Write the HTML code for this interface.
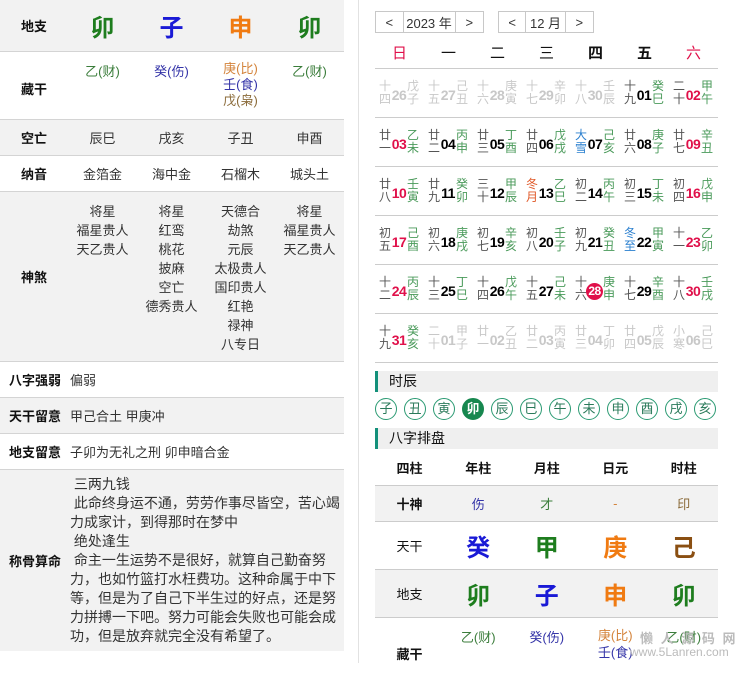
<!DOCTYPE html>
<html><head><meta charset="utf-8">
<style>
*{margin:0;padding:0;box-sizing:border-box}
body{width:740px;height:663px;overflow:hidden;background:#fff;font-family:"Liberation Sans","Noto Sans CJK SC","Microsoft YaHei",sans-serif;font-size:13px;color:#333;position:relative}
.L{position:absolute;left:0;top:0;width:344px}
.r{position:absolute;left:0;width:344px;border-bottom:1px solid #d4d4d4;display:flex;align-items:center}
.g{background:#f2f2f2}
.lab{width:68px;text-align:center;font-weight:bold;color:#111}
.lab2{width:70px;text-align:center;font-weight:bold;color:#111;white-space:nowrap}
.c{width:69px;text-align:center}
.big{font-size:24px;font-weight:bold}
.gr{color:#1e7d1e}.bl{color:#1a1ad6}.or{color:#f07b12}.br{color:#8a4f12}
.sgr{color:#3b7d3b}.sbl{color:#3434a8}.sor{color:#d4843c}.sbr{color:#8b6b3a}
.vline{position:absolute;left:358px;top:0;width:1px;height:663px;background:#e2e2e2}
.nav{position:absolute;top:11px;height:22px;border:1px solid #c8c8c8;display:flex;font-size:13px;color:#333}
.nav span{display:flex;align-items:center;justify-content:center;border-right:1px solid #c8c8c8}
.nav span:last-child{border-right:none}
.wk{position:absolute;left:375px;top:40px;width:343px;height:29px;display:flex;border-bottom:1px solid #ccc}
.wk div{width:49px;text-align:center;font-size:15px;line-height:28px;color:#111}
.wk div.rd{color:#e0104a}
.row{position:absolute;left:375px;width:343px;height:49px;display:flex;border-bottom:1px solid #ccc}
.d{width:49px;display:flex;align-items:center;padding-left:4px}
.lu{width:12px;font-size:12px;line-height:13px;color:#555}
.n{width:16px;font-size:14px;font-weight:bold;color:#000;text-align:center;margin-top:4px;letter-spacing:-0.5px}
.gz{width:12px;font-size:12px;line-height:13px;color:#4a9a5a}
.n.rd{color:#e0104a}
.p .lu,.p .n,.p .gz{color:#c8c8c8}
.jq{color:#2a7fcf}
.yue{color:#e05a2a}
.cir{display:inline-block;width:17px;height:17px;border-radius:50%;background:#e0104a;color:#fff;font-size:12px;line-height:17px;text-align:center;margin-left:-1px}
.hd{position:absolute;left:375px;width:343px;height:21px;background:#efefef;border-left:3px solid #13907a;font-size:14px;line-height:21px;padding-left:11px;color:#111}
.sc{position:absolute;left:375px;top:398px;display:flex}
.sc span{width:22px;height:22px;border:1px solid #2a9a72;border-radius:50%;margin-right:7px;text-align:center;line-height:20px;font-size:13px;color:#2a7a5a}
.sc span.on{background:#17874f;color:#fff;border-color:#17874f;font-weight:bold}
.br2{position:absolute;left:375px;width:343px;display:flex;align-items:center;border-bottom:1px solid #ccc}
.br2 .a{width:69px;text-align:center;font-weight:bold;color:#111}
.br2 .b{width:68.5px;text-align:center}
.wm{position:absolute;left:640px;top:628px;color:#bbb;font-size:13px;font-weight:bold;letter-spacing:2px;white-space:nowrap}
.wm2{position:absolute;left:630px;top:645px;color:#bbb;font-size:12px;white-space:nowrap}
.cg{line-height:19px;width:274px;font-size:14px;white-space:nowrap}
</style></head><body>
<div class="L">
<div class="r g" style="top:0;height:52px"><div class="lab">地支</div><div class="c big gr">卯</div><div class="c big bl">子</div><div class="c big or">申</div><div class="c big gr">卯</div></div>
<div class="r" style="top:52px;height:68px;align-items:flex-start"><div class="lab" style="margin-top:27px">藏干</div><div class="c sgr" style="margin-top:9px">乙(财)</div><div class="c sbl" style="margin-top:9px">癸(伤)</div><div class="c" style="margin-top:9px;line-height:16px"><span class="sor">庚(比)</span><br><span class="sbl">壬(食)</span><br><span class="sbr">戊(枭)</span></div><div class="c sgr" style="margin-top:9px">乙(财)</div></div>
<div class="r g" style="top:120px;height:36px"><div class="lab">空亡</div><div class="c">辰巳</div><div class="c">戌亥</div><div class="c">子丑</div><div class="c">申酉</div></div>
<div class="r" style="top:156px;height:36px"><div class="lab">纳音</div><div class="c">金箔金</div><div class="c">海中金</div><div class="c">石榴木</div><div class="c">城头土</div></div>
<div class="r g" style="top:192px;height:170px;align-items:flex-start;line-height:19px"><div class="lab" style="margin-top:76px">神煞</div><div class="c" style="margin-top:10px">将星<br>福星贵人<br>天乙贵人</div><div class="c" style="margin-top:10px">将星<br>红鸾<br>桃花<br>披麻<br>空亡<br>德秀贵人</div><div class="c" style="margin-top:10px">天德合<br>劫煞<br>元辰<br>太极贵人<br>国印贵人<br>红艳<br>禄神<br>八专日</div><div class="c" style="margin-top:10px">将星<br>福星贵人<br>天乙贵人</div></div>
<div class="r" style="top:362px;height:36px"><div class="lab2">八字强弱</div><div>偏弱</div></div>
<div class="r g" style="top:398px;height:36px"><div class="lab2">天干留意</div><div>甲己合土 甲庚冲</div></div>
<div class="r" style="top:434px;height:36px"><div class="lab2">地支留意</div><div>子卯为无礼之刑 卯申暗合金</div></div>
<div class="r g" style="top:470px;height:181px;border-bottom:none"><div class="lab2">称骨算命</div><div class="cg">&nbsp;三两九钱<br>&nbsp;此命终身运不通，劳劳作事尽皆空，苦心竭<br>力成家计，到得那时在梦中<br>&nbsp;绝处逢生<br>&nbsp;命主一生运势不是很好，就算自己勤奋努<br>力，也如竹篮打水枉费功。这种命属于中下<br>等，但是为了自己下半生过的好点，还是努<br>力拼搏一下吧。努力可能会失败也可能会成<br>功，但是放弃就完全没有希望了。</div></div>
</div>
<div class="vline"></div>

<div class="nav" style="left:375px;width:109px"><span style="width:28px">&lt;</span><span style="width:53px">2023 年</span><span style="width:28px">&gt;</span></div>
<div class="nav" style="left:498px;width:96px"><span style="width:28px">&lt;</span><span style="width:40px">12 月</span><span style="width:28px">&gt;</span></div>
<div class="wk"><div class="rd">日</div><div>一</div><div>二</div><div>三</div><div style="font-weight:bold">四</div><div style="font-weight:bold">五</div><div class="rd">六</div></div>

<div class="row" style="top:69px">
<div class="d p"><div class="lu">十四</div><div class="n">26</div><div class="gz">戊子</div></div>
<div class="d p"><div class="lu">十五</div><div class="n">27</div><div class="gz">己丑</div></div>
<div class="d p"><div class="lu">十六</div><div class="n">28</div><div class="gz">庚寅</div></div>
<div class="d p"><div class="lu">十七</div><div class="n">29</div><div class="gz">辛卯</div></div>
<div class="d p"><div class="lu">十八</div><div class="n">30</div><div class="gz">壬辰</div></div>
<div class="d"><div class="lu">十九</div><div class="n">01</div><div class="gz">癸巳</div></div>
<div class="d"><div class="lu">二十</div><div class="n rd">02</div><div class="gz">甲午</div></div>
</div>
<div class="row" style="top:118px">
<div class="d"><div class="lu">廿一</div><div class="n rd">03</div><div class="gz">乙未</div></div>
<div class="d"><div class="lu">廿二</div><div class="n">04</div><div class="gz">丙申</div></div>
<div class="d"><div class="lu">廿三</div><div class="n">05</div><div class="gz">丁酉</div></div>
<div class="d"><div class="lu">廿四</div><div class="n">06</div><div class="gz">戊戌</div></div>
<div class="d"><div class="lu jq">大雪</div><div class="n">07</div><div class="gz">己亥</div></div>
<div class="d"><div class="lu">廿六</div><div class="n">08</div><div class="gz">庚子</div></div>
<div class="d"><div class="lu">廿七</div><div class="n rd">09</div><div class="gz">辛丑</div></div>
</div>
<div class="row" style="top:167px">
<div class="d"><div class="lu">廿八</div><div class="n rd">10</div><div class="gz">壬寅</div></div>
<div class="d"><div class="lu">廿九</div><div class="n">11</div><div class="gz">癸卯</div></div>
<div class="d"><div class="lu">三十</div><div class="n">12</div><div class="gz">甲辰</div></div>
<div class="d"><div class="lu yue">冬月</div><div class="n">13</div><div class="gz">乙巳</div></div>
<div class="d"><div class="lu">初二</div><div class="n">14</div><div class="gz">丙午</div></div>
<div class="d"><div class="lu">初三</div><div class="n">15</div><div class="gz">丁未</div></div>
<div class="d"><div class="lu">初四</div><div class="n rd">16</div><div class="gz">戊申</div></div>
</div>
<div class="row" style="top:216px">
<div class="d"><div class="lu">初五</div><div class="n rd">17</div><div class="gz">己酉</div></div>
<div class="d"><div class="lu">初六</div><div class="n">18</div><div class="gz">庚戌</div></div>
<div class="d"><div class="lu">初七</div><div class="n">19</div><div class="gz">辛亥</div></div>
<div class="d"><div class="lu">初八</div><div class="n">20</div><div class="gz">壬子</div></div>
<div class="d"><div class="lu">初九</div><div class="n">21</div><div class="gz">癸丑</div></div>
<div class="d"><div class="lu jq">冬至</div><div class="n">22</div><div class="gz">甲寅</div></div>
<div class="d"><div class="lu">十一</div><div class="n rd">23</div><div class="gz">乙卯</div></div>
</div>
<div class="row" style="top:265px">
<div class="d"><div class="lu">十二</div><div class="n rd">24</div><div class="gz">丙辰</div></div>
<div class="d"><div class="lu">十三</div><div class="n">25</div><div class="gz">丁巳</div></div>
<div class="d"><div class="lu">十四</div><div class="n">26</div><div class="gz">戊午</div></div>
<div class="d"><div class="lu">十五</div><div class="n">27</div><div class="gz">己未</div></div>
<div class="d"><div class="lu">十六</div><div class="n"><span class="cir">28</span></div><div class="gz">庚申</div></div>
<div class="d"><div class="lu">十七</div><div class="n">29</div><div class="gz">辛酉</div></div>
<div class="d"><div class="lu">十八</div><div class="n rd">30</div><div class="gz">壬戌</div></div>
</div>
<div class="row" style="top:314px">
<div class="d"><div class="lu">十九</div><div class="n rd">31</div><div class="gz">癸亥</div></div>
<div class="d p"><div class="lu">二十</div><div class="n">01</div><div class="gz">甲子</div></div>
<div class="d p"><div class="lu">廿一</div><div class="n">02</div><div class="gz">乙丑</div></div>
<div class="d p"><div class="lu">廿二</div><div class="n">03</div><div class="gz">丙寅</div></div>
<div class="d p"><div class="lu">廿三</div><div class="n">04</div><div class="gz">丁卯</div></div>
<div class="d p"><div class="lu">廿四</div><div class="n">05</div><div class="gz">戊辰</div></div>
<div class="d p"><div class="lu">小寒</div><div class="n">06</div><div class="gz">己巳</div></div>
</div>

<div class="hd" style="top:371px">时辰</div>
<div class="sc"><span>子</span><span>丑</span><span>寅</span><span class="on">卯</span><span>辰</span><span>巳</span><span>午</span><span>未</span><span>申</span><span>酉</span><span>戌</span><span>亥</span></div>
<div class="hd" style="top:428px">八字排盘</div>

<div class="br2" style="top:450px;height:36px"><div class="a">四柱</div><div class="b" style="font-weight:bold;color:#111">年柱</div><div class="b" style="font-weight:bold;color:#111">月柱</div><div class="b" style="font-weight:bold;color:#111">日元</div><div class="b" style="font-weight:bold;color:#111">时柱</div></div>
<div class="br2 g" style="top:486px;height:36px"><div class="a">十神</div><div class="b sbl">伤</div><div class="b sgr">才</div><div class="b sor">-</div><div class="b sbr">印</div></div>
<div class="br2" style="top:522px;height:48px"><div class="a" style="font-weight:normal">天干</div><div class="b big bl">癸</div><div class="b big gr">甲</div><div class="b big or">庚</div><div class="b big br">己</div></div>
<div class="br2 g" style="top:570px;height:48px"><div class="a" style="font-weight:normal">地支</div><div class="b big gr">卯</div><div class="b big bl">子</div><div class="b big or">申</div><div class="b big gr">卯</div></div>
<div class="br2" style="top:618px;height:60px;align-items:flex-start;border-bottom:none"><div class="a" style="margin-top:26px">藏干</div><div class="b sgr" style="margin-top:9px">乙(财)</div><div class="b sbl" style="margin-top:9px">癸(伤)</div><div class="b" style="margin-top:9px;line-height:17px"><span class="sor">庚(比)</span><br><span class="sbl">壬(食)</span></div><div class="b sgr" style="margin-top:9px">乙(财)</div></div>
<div class="wm">懒 人 源 码 网</div>
<div class="wm2">www.5Lanren.com</div>
</body></html>
